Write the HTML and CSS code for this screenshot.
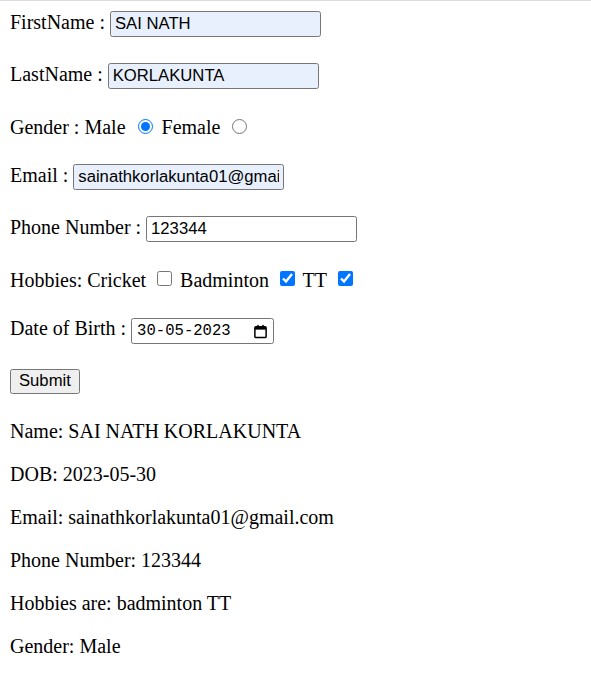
FILE: index.html
```html
<!DOCTYPE html>
<html>
<head>
<meta charset="utf-8">
<link rel="stylesheet" href="styles.css">
</head>
<body>
<form class="form">
  <div class="row row-input">FirstName : <input class="field autofill" type="text" value="SAI NATH"></div>
  <div class="row row-input">LastName : <input class="field autofill" type="text" value="KORLAKUNTA"></div>
  <div class="row row-plain">Gender : Male <input class="radio" type="radio" name="g" checked> Female <input class="radio" type="radio" name="g"></div>
  <div class="row row-input">Email : <input class="field autofill" type="text" value="sainathkorlakunta01@gmail.com"></div>
  <div class="row row-input">Phone Number : <input class="field" type="text" value="123344"></div>
  <div class="row row-plain">Hobbies: Cricket <input class="check" type="checkbox"> Badminton <input class="check" type="checkbox" checked> TT <input class="check" type="checkbox" checked></div>
  <div class="row row-date">Date of Birth : <span class="date"><span class="date-text">30-05-2023</span><svg class="cal" viewBox="0 0 16 16" width="15" height="15"><rect x="2" y="3" width="12" height="11.5" rx="1.2" fill="none" stroke="#000" stroke-width="1.6"/><rect x="2" y="3" width="12" height="3" fill="#000"/><rect x="4.5" y="1" width="1.6" height="3" fill="#000"/><rect x="9.9" y="1" width="1.6" height="3" fill="#000"/></svg></span></div>
  <div class="row row-submit"><button class="btn" type="button">Submit</button></div>
</form>
<div class="result">
  <p class="line">Name: SAI NATH KORLAKUNTA</p>
  <p class="line">DOB: 2023-05-30</p>
  <p class="line">Email: sainathkorlakunta01@gmail.com</p>
  <p class="line">Phone Number: 123344</p>
  <p class="line">Hobbies are: badminton TT</p>
  <p class="line">Gender: Male</p>
</div>
</body>
</html>
```
FILE: styles.css
```css
html {
  border-top: 1px solid #dcdcdc;
  background: #fff;
}
body {
  margin: 10px 10px 10px;
  font-family: "Liberation Serif", "Times New Roman", serif;
  font-size: 20px;
  color: #000;
}
.form {
  margin: 0;
}
.row {
  margin-bottom: 23px;
}
.row-input {
  height: 29px;
}
.row-plain {
  height: 26px;
  padding-top: 1px;
  box-sizing: border-box;
}
.row-date {
  height: 28px;
}
.row-submit {
  height: 28px;
  margin-bottom: 24px;
}
.field {
  box-sizing: border-box;
  width: 211px;
  height: 26px;
  border: 1px solid #767676;
  border-radius: 2.5px;
  padding: 0 4px;
  font-family: "Liberation Sans", Arial, sans-serif;
  font-size: 16.67px;
  color: #000;
  background: #fff;
  margin: 0;
  outline: none;
}
.autofill {
  background: #e8f0fe;
}
.radio {
  width: 15px;
  height: 15px;
  margin: 0 4px 0 7px;
  vertical-align: 0;
}
.check {
  width: 15px;
  height: 15px;
  margin: 0 3px 0 6px;
  vertical-align: 1px;
}
.date {
  display: inline-flex;
  align-items: center;
  box-sizing: border-box;
  width: 143px;
  height: 26px;
  border: 1px solid #767676;
  border-radius: 2.5px;
  padding: 0 5px 0 5px;
  font-family: "Liberation Mono", "Courier New", monospace;
  font-size: 15.6px;
  justify-content: space-between;
}
.cal {
  display: block;
}
.btn {
  box-sizing: border-box;
  height: 25px;
  padding: 0 8px;
  border: 1px solid #767676;
  border-radius: 2.5px;
  background: #efefef;
  font-family: "Liberation Sans", Arial, sans-serif;
  font-size: 16.67px;
  color: #000;
}
.result .line {
  margin: 20px 0;
}
```
